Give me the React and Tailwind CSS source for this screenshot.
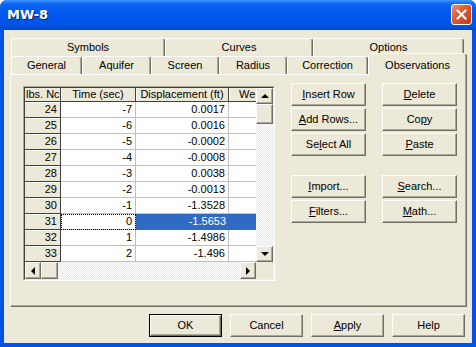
import React from 'react';

const rows = [
  ['24', '-7', '0.0017'],
  ['25', '-6', '0.0016'],
  ['26', '-5', '-0.0002'],
  ['27', '-4', '-0.0008'],
  ['28', '-3', '0.0038'],
  ['29', '-2', '-0.0013'],
  ['30', '-1', '-1.3528'],
  ['31', '0', '-1.5653'],
  ['32', '1', '-1.4986'],
  ['33', '2', '-1.496'],
];

const raised =
  'bg-[#ece9d8] border border-t-white border-l-white border-r-[#716f64] border-b-[#716f64]';

function Btn({ children, w = 'w-[75px]', def }) {
  const inner = (
    <div className={`${raised} h-full w-full flex items-center justify-center shadow-[inset_-1px_-1px_0_#aca899]`}>
      {children}
    </div>
  );
  if (def) {
    return <div className={`${w} h-[23px] border border-black`}>{inner}</div>;
  }
  return <div className={`${w} h-[23px]`}>{inner}</div>;
}

function Tab({ w, children }) {
  return (
    <div
      className={`${w} h-full flex items-center justify-center border-t border-l border-t-white border-l-white border-r border-r-[#716f64] rounded-t-[3px] shadow-[inset_-1px_0_0_#aca899]`}
    >
      {children}
    </div>
  );
}

function ScrollBtn({ dir, className = '' }) {
  const tri = {
    up: 'border-x-[4px] border-x-transparent border-b-[4px] border-b-black',
    down: 'border-x-[4px] border-x-transparent border-t-[4px] border-t-black',
    left: 'border-y-[4px] border-y-transparent border-r-[4px] border-r-black',
    right: 'border-y-[4px] border-y-transparent border-l-[4px] border-l-black',
  }[dir];
  return (
    <div className={`${raised} ${className} flex items-center justify-center shadow-[inset_-1px_-1px_0_#aca899]`}>
      <div className={`w-0 h-0 ${tri}`} />
    </div>
  );
}

const checker =
  'bg-[repeating-conic-gradient(#ece9d8_0_25%,#ffffff_0_50%)] bg-[length:2px_2px]';

export default function App() {
  return (
    <div
      className="w-[476px] h-[347px] flex flex-col bg-[#0054e3] rounded-t-[7px] overflow-hidden text-[11px] text-black"
      style={{ fontFamily: '"Liberation Sans", Arial, sans-serif' }}
    >
      {/* title bar */}
      <div className="h-[30px] flex items-center pl-[7px] pr-[4px] bg-[linear-gradient(to_bottom,#3d95ff_0%,#0a64f0_14%,#0058ee_45%,#0054e3_85%,#0046c8_100%)]">
        <span
          className="text-white font-bold text-[13px] [text-shadow:1px_1px_0_#0a1e6e]"
          style={{ fontFamily: '"DejaVu Sans", Verdana, sans-serif' }}
        >
          MW-8
        </span>
        <div className="ml-auto -mt-[2px] w-[21px] h-[21px] rounded-[3px] border border-white bg-[linear-gradient(135deg,#f0926f_0%,#e0552f_45%,#c13d16_100%)] flex items-center justify-center">
          <svg width="11" height="11" viewBox="0 0 11 11">
            <path d="M1.5 1.5 L9.5 9.5 M9.5 1.5 L1.5 9.5" stroke="white" strokeWidth="2" strokeLinecap="square" />
          </svg>
        </div>
      </div>

      {/* client */}
      <div className="flex-1 px-[4px] pb-[4px] bg-[#0054e3]">
        <div className="h-full bg-[#ece9d8] pl-[6px] pt-[8px] flex flex-col">
          <div className="w-[457px]">
            <div className="h-[18px] flex pl-[1px]">
              <Tab w="w-[154px]">Symbols</Tab>
              <Tab w="w-[148px]">Curves</Tab>
              <Tab w="w-[151px]">Options</Tab>
            </div>
            <div className="h-[18px] flex pl-[1px]">
              <Tab w="w-[71px]">General</Tab>
              <Tab w="w-[69px]">Aquifer</Tab>
              <Tab w="w-[68px]">Screen</Tab>
              <Tab w="w-[68px]">Radius</Tab>
              <Tab w="w-[81px]">Correction</Tab>
              <div className="relative z-10 w-[99px] h-[22px] -mt-[3px] bg-[#ece9d8] flex items-start pt-[3px] justify-center border-t border-l border-t-white border-l-white border-r border-r-[#716f64] rounded-t-[3px] shadow-[inset_-1px_0_0_#aca899]">
                Observations
              </div>
            </div>

            {/* panel */}
            <div className="h-[233px] border border-t-white border-l-white border-r-[#716f64] border-b-[#716f64] shadow-[inset_-1px_-1px_0_#aca899] pl-[12px] pt-[8px] flex">
              {/* grid */}
              <div className="mt-[3px] w-[252px] h-[195px] border border-t-[#aca899] border-l-[#aca899] border-r-white border-b-white">
                <div className="w-full h-full border border-t-[#404040] border-l-[#404040] border-r-[#f1efe2] border-b-[#f1efe2] flex flex-col bg-white">
                  <div className="flex h-[174px]">
                    <div className="w-[231px] flex flex-col overflow-hidden">
                      <div className="flex h-[14px]">
                        <div className="w-[36px] shrink-0 bg-[#ece9d8] border-r border-b border-r-[#404040] border-b-[#404040] flex items-center pl-[1px] whitespace-nowrap leading-none">
                          lbs. Nc
                        </div>
                        <div className="w-[75px] shrink-0 bg-[#ece9d8] border-r border-b border-r-[#404040] border-b-[#404040] shadow-[inset_1px_0_0_white] flex items-center justify-center leading-none">
                          Time (sec)
                        </div>
                        <div className="w-[93px] shrink-0 bg-[#ece9d8] border-r border-b border-r-[#404040] border-b-[#404040] shadow-[inset_1px_0_0_white] flex items-center justify-center whitespace-nowrap leading-none">
                          Displacement (ft)
                        </div>
                        <div className="w-[27px] shrink-0 bg-[#ece9d8] border-b border-b-[#404040] shadow-[inset_1px_0_0_white] flex items-center pl-[10px] whitespace-nowrap leading-none">
                          We
                        </div>
                      </div>
                      {rows.map(([n, t, d]) => {
                        const sel = n === '31';
                        return (
                          <div key={n} className="flex h-[16px]">
                            <div className="w-[36px] shrink-0 bg-[#ece9d8] border-r border-b border-r-[#404040] border-b-[#404040] shadow-[inset_0_1px_0_white] flex items-center justify-end pr-[3px] leading-none">
                              {n}
                            </div>
                            <div
                              className={`w-[75px] shrink-0 border-r border-b border-r-[#c0c0c0] border-b-[#c0c0c0] flex items-center justify-end pr-[3px] leading-none ${
                                sel ? 'outline-1 outline-dotted outline-black -outline-offset-1' : ''
                              }`}
                            >
                              {t}
                            </div>
                            <div
                              className={`w-[93px] shrink-0 border-b flex items-center justify-end pr-[3px] leading-none ${
                                sel
                                  ? 'bg-[#316ac5] text-white border-b-[#316ac5]'
                                  : 'border-r border-r-[#c0c0c0] border-b-[#c0c0c0]'
                              }`}
                            >
                              {d}
                            </div>
                            <div
                              className={`w-[27px] shrink-0 border-b ${
                                sel ? 'bg-[#316ac5] border-b-[#316ac5]' : 'border-b-[#c0c0c0]'
                              }`}
                            />
                          </div>
                        );
                      })}
                    </div>
                    {/* vertical scrollbar */}
                    <div className="w-[17px] flex flex-col">
                      <ScrollBtn dir="up" className="h-[16px]" />
                      <div className={`${raised} h-[20px] shadow-[inset_-1px_-1px_0_#aca899]`} />
                      <div className={`flex-1 ${checker}`} />
                      <ScrollBtn dir="down" className="h-[16px]" />
                    </div>
                  </div>
                  {/* horizontal scrollbar */}
                  <div className="flex h-[17px]">
                    <div className="w-[231px] flex">
                      <ScrollBtn dir="left" className="w-[16px]" />
                      <div className={`${raised} w-[17px] shadow-[inset_-1px_-1px_0_#aca899]`} />
                      <div className={`flex-1 ${checker}`} />
                      <ScrollBtn dir="right" className="w-[16px]" />
                    </div>
                    <div className="w-[17px] bg-[#ece9d8]" />
                  </div>
                </div>
              </div>

              {/* buttons */}
              <div className="ml-[16px] flex gap-[16px]">
                <div className="flex flex-col gap-[2px]">
                  <Btn><span><u>I</u>nsert Row</span></Btn>
                  <Btn><span><u>A</u>dd Rows...</span></Btn>
                  <Btn><span>Se<u>l</u>ect All</span></Btn>
                  <div className="h-[15px]" />
                  <Btn><span><u>I</u>mport...</span></Btn>
                  <Btn><span><u>F</u>ilters...</span></Btn>
                </div>
                <div className="flex flex-col gap-[2px]">
                  <Btn><span><u>D</u>elete</span></Btn>
                  <Btn><span>Co<u>p</u>y</span></Btn>
                  <Btn><span><u>P</u>aste</span></Btn>
                  <div className="h-[15px]" />
                  <Btn><span><u>S</u>earch...</span></Btn>
                  <Btn><span><u>M</u>ath...</span></Btn>
                </div>
              </div>
            </div>
          </div>

          {/* bottom buttons */}
          <div className="mt-[7px] flex gap-[8px] pl-[139px]">
            <Btn w="w-[73px]" def>OK</Btn>
            <Btn w="w-[73px]">Cancel</Btn>
            <Btn w="w-[73px]"><span><u>A</u>pply</span></Btn>
            <Btn w="w-[73px]">Help</Btn>
          </div>
        </div>
      </div>
    </div>
  );
}
